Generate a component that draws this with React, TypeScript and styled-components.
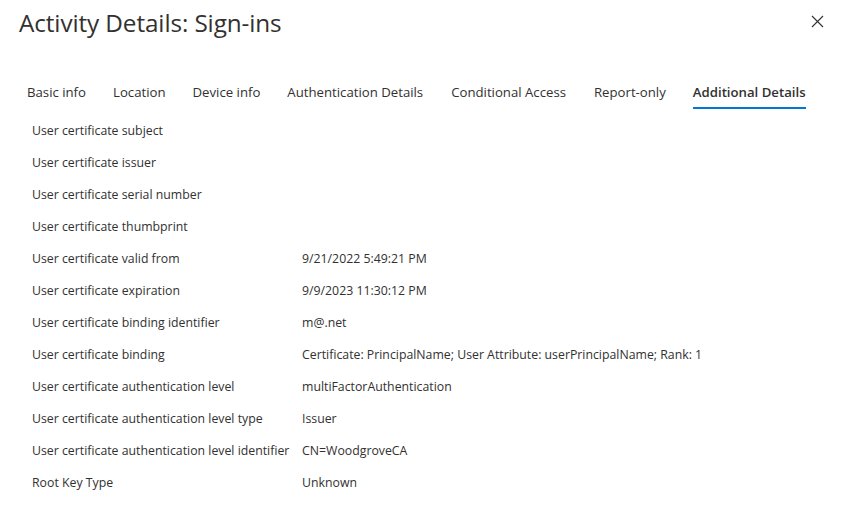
import React from "react";
import styled, { createGlobalStyle } from "styled-components";

const Global = createGlobalStyle`
  html, body { margin: 0; padding: 0; background: #ffffff; }
  body { font-family: "Open Sans", "Noto Sans", sans-serif; color: #323130; }
`;

const Panel = styled.div`
  width: 849px;
  height: 527px;
  box-sizing: border-box;
  display: flex;
  flex-direction: column;
  background: #fff;
`;

const Header = styled.div`
  display: flex;
  align-items: center;
  justify-content: space-between;
  padding: 5px 20px 0 19px;
  height: 34px;
`;

const Title = styled.h1`
  margin: 0;
  font-size: 24.3px;
  font-weight: 400;
  color: #323130;
  letter-spacing: -0.1px;
`;

const Close = styled.button`
  border: none;
  background: transparent;
  padding: 0;
  width: 16px;
  height: 16px;
  display: flex;
  align-items: center;
  justify-content: center;
  margin-right: 4px;
  margin-top: -2px;
  cursor: pointer;
`;

const Tabs = styled.div`
  display: flex;
  margin-top: 44px;
  padding-left: 27px;
`;

const Tab = styled.div<{ $active?: boolean }>`
  position: relative;
  font-size: 13.2px;
  padding: 0 0 8px 0;
  margin-right: 27px;
  color: #323130;
  font-weight: ${(p) => (p.$active ? 600 : 400)};
  white-space: nowrap;
  &::after {
    content: "";
    display: ${(p) => (p.$active ? "block" : "none")};
    position: absolute;
    left: 0;
    right: 0;
    bottom: 0;
    height: 2px;
    background: #0078d4;
  }
  &:nth-child(4) { margin-right: 28px; }
  &:nth-child(5) { margin-right: 28px; }
  &:nth-child(6) { margin-right: 27px; }
`;

const Rows = styled.div`
  display: flex;
  flex-direction: column;
  padding: 5px 0 0 32px;
`;

const Row = styled.div`
  display: grid;
  grid-template-columns: 270px 1fr;
  height: 32px;
  align-items: center;
  font-size: 12.3px;
  color: #323130;
`;

const Cell = styled.span`
  white-space: nowrap;
`;

const tabs = [
  "Basic info",
  "Location",
  "Device info",
  "Authentication Details",
  "Conditional Access",
  "Report-only",
  "Additional Details",
];

const rows: [string, string][] = [
  ["User certificate subject", ""],
  ["User certificate issuer", ""],
  ["User certificate serial number", ""],
  ["User certificate thumbprint", ""],
  ["User certificate valid from", "9/21/2022 5:49:21 PM"],
  ["User certificate expiration", "9/9/2023 11:30:12 PM"],
  ["User certificate binding identifier", "m@.net"],
  ["User certificate binding", "Certificate: PrincipalName; User Attribute: userPrincipalName; Rank: 1"],
  ["User certificate authentication level", "multiFactorAuthentication"],
  ["User certificate authentication level type", "Issuer"],
  ["User certificate authentication level identifier", "CN=WoodgroveCA"],
  ["Root Key Type", "Unknown"],
];

export default function App() {
  return (
    <Panel>
      <Global />
      <Header>
        <Title>Activity Details: Sign-ins</Title>
        <Close aria-label="Close">
          <svg width="13" height="13" viewBox="0 0 13 13">
            <path d="M1 1 L12 12 M12 1 L1 12" stroke="#323130" strokeWidth="1.1" />
          </svg>
        </Close>
      </Header>
      <Tabs>
        {tabs.map((t) => (
          <Tab key={t} $active={t === "Additional Details"}>
            {t}
          </Tab>
        ))}
      </Tabs>
      <Rows>
        {rows.map(([k, v]) => (
          <Row key={k}>
            <Cell>{k}</Cell>
            <Cell>{v}</Cell>
          </Row>
        ))}
      </Rows>
    </Panel>
  );
}
